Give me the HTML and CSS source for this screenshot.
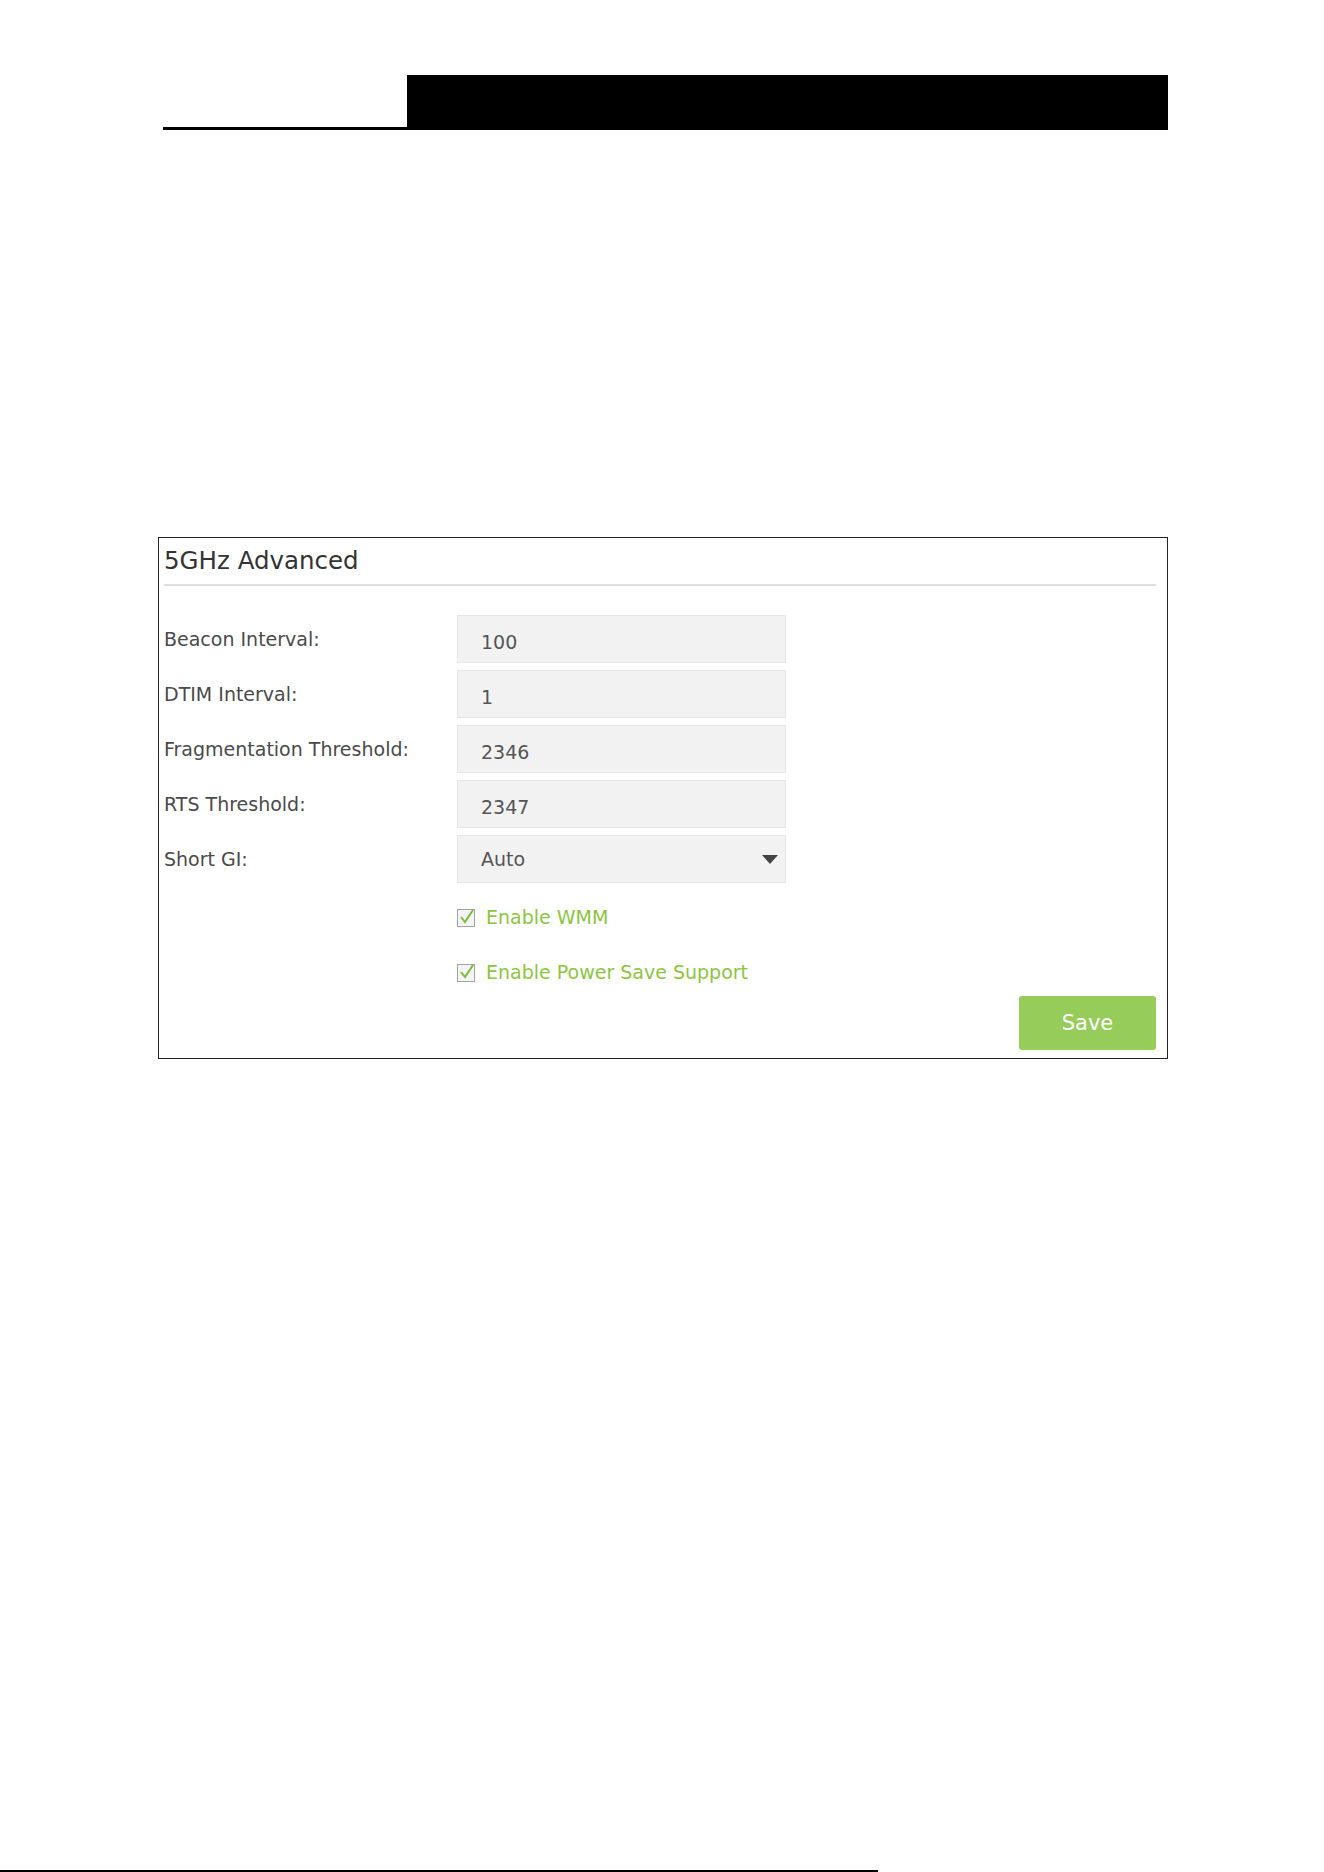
FILE: index.html
```html
<!DOCTYPE html>
<html lang="en">
<head>
    <meta charset="UTF-8">
    <meta name="viewport" content="width=device-width, initial-scale=1.0">
    <title>5GHz Advanced</title>
    <link rel="stylesheet" href="styles.css">
</head>
<body>

    <!-- page header strip -->
    <div class="page-head">
        <div class="head-rule"></div>
        <div class="head-bar"></div>
    </div>

    <div class="panel">
        <h2 class="panel-title">5GHz Advanced</h2>

        <form class="adv-form">
            <div class="row">
                <label for="beacon">Beacon Interval:</label>
                <input type="text" id="beacon" value="100">
            </div>
            <div class="row">
                <label for="dtim">DTIM Interval:</label>
                <input type="text" id="dtim" value="1">
            </div>
            <div class="row">
                <label for="frag">Fragmentation Threshold:</label>
                <input type="text" id="frag" value="2346">
            </div>
            <div class="row">
                <label for="rts">RTS Threshold:</label>
                <input type="text" id="rts" value="2347">
            </div>
            <div class="row">
                <label>Short GI:</label>
                <div class="select">
                    <span>Auto</span>
                    <span class="caret"></span>
                </div>
            </div>

            <div class="check-row first">
                <svg class="check" width="19" height="19" viewBox="0 0 19 19">
                    <rect x="0.5" y="1.5" width="17" height="17" fill="#f4f4f4" stroke="#a3a3a3"/>
                    <path d="M4 9 L8 14 L16 2" fill="none" stroke="#7dbb3c" stroke-width="2"/>
                </svg>
                <span>Enable WMM</span>
            </div>
            <div class="check-row">
                <svg class="check" width="19" height="19" viewBox="0 0 19 19">
                    <rect x="0.5" y="1.5" width="17" height="17" fill="#f4f4f4" stroke="#a3a3a3"/>
                    <path d="M4 9 L8 14 L16 2" fill="none" stroke="#7dbb3c" stroke-width="2"/>
                </svg>
                <span>Enable Power Save Support</span>
            </div>

            <div class="actions">
                <button type="button">Save</button>
            </div>
        </form>
    </div>

    <div class="page-foot"></div>

</body>
</html>
```

FILE: styles.css
```css
body {
    font-family: 'DejaVu Sans', Verdana, sans-serif;
    margin: 0;
    padding: 0;
    background-color: #fff;
    color: #4a4a4a;
}
.page-head {
    display: flex;
    align-items: flex-end;
    margin: 75px 0 0 163px;
    height: 55px;
}
.head-rule {
    width: 244px;
    border-bottom: 3px solid #000;
}
.head-bar {
    width: 761px;
    height: 55px;
    background-color: #000;
}
.panel {
    width: 992px;
    height: 520px;
    margin: 407px 0 0 158px;
    padding: 0 11px 0 5px;
    border: 1px solid #222;
}
.panel-title {
    margin: 0;
    padding: 8px 0 9px 0;
    font-size: 24.5px;
    font-weight: normal;
    color: #333;
    border-bottom: 2px solid #ddd;
}
.adv-form {
    padding-top: 29px;
}
.row {
    display: flex;
    align-items: center;
    height: 48px;
    margin-bottom: 7px;
}
.row label {
    width: 293px;
    font-size: 19px;
    color: #4a4a4a;
}
.row input, .select {
    box-sizing: border-box;
    width: 329px;
    height: 48px;
    padding: 6px 23px 0 23px;
    border: 1px solid #e6e6e6;
    background-color: #f2f2f2;
    font-family: 'DejaVu Sans', Verdana, sans-serif;
    font-size: 19px;
    color: #555;
    outline: none;
}
.select {
    display: flex;
    align-items: center;
    justify-content: space-between;
    padding: 0 7px 0 23px;
}
.caret {
    width: 0;
    height: 0;
    border-left: 8px solid transparent;
    border-right: 8px solid transparent;
    border-top: 9px solid #444;
}
.check-row {
    display: flex;
    align-items: center;
    gap: 10px;
    height: 24px;
    margin: 0 0 31px 293px;
    font-size: 19px;
    color: #8cc63f;
}
.check-row.first {
    margin-top: 22px;
}
.check {
    display: block;
}
.actions {
    display: flex;
    justify-content: flex-end;
    margin-top: -19px;
}
.actions button {
    width: 137px;
    height: 54px;
    border: none;
    border-radius: 3px;
    background-color: #96cc5a;
    color: #fff;
    font-family: 'DejaVu Sans', Verdana, sans-serif;
    font-size: 21px;
    cursor: pointer;
}
.page-foot {
    width: 878px;
    margin-top: 811px;
    border-top: 2px solid #000;
}
```
